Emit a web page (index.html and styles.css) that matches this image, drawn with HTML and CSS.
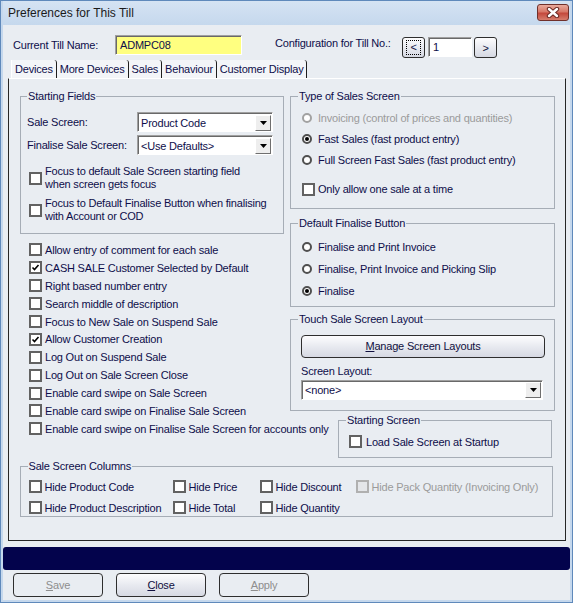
FILE: index.html
```html
<!DOCTYPE html>
<html lang="en">

<head>
    <meta charset="UTF-8">
    <meta name="viewport" content="width=device-width, initial-scale=1.0">
    <title>Preferences for This Till</title>
    <link rel="stylesheet" href="styles.css">
</head>

<body>
    <div class="window">
        <div class="titlebar">
            <span class="title">Preferences for This Till</span>
            <button class="close-x">
                <svg width="14" height="11" viewBox="0 0 14 11">
                    <path d="M3 2 L11 9 M11 2 L3 9" stroke="#6b2a24" stroke-width="4.4" stroke-linecap="round" />
                    <path d="M3 2 L11 9 M11 2 L3 9" stroke="#fff" stroke-width="2.4" stroke-linecap="round" />
                </svg>
            </button>
        </div>

        <div class="client">
            <!-- till name + till number picker -->
            <div class="till-row">
                <span class="till-lbl">Current Till Name:</span>
                <div class="edit yellow">ADMPC08</div>
                <span class="cfg-lbl">Configuration for Till No.:</span>
                <button class="nav-btn"><span class="focus">&lt;</span></button>
                <div class="edit num">1</div>
                <button class="nav-btn">&gt;</button>
            </div>

            <div class="tabs">
                <div class="tab">Devices</div>
                <div class="tab">More Devices</div>
                <div class="tab">Sales</div>
                <div class="tab">Behaviour</div>
                <div class="tab">Customer Display</div>
            </div>

            <div class="panel">
                <div class="col-left">
                    <fieldset class="group starting">
                        <legend>Starting Fields</legend>
                        <div class="field-row">
                            <span class="field-lbl">Sale Screen:</span>
                            <div class="combo">
                                <span class="combo-text">Product Code</span>
                                <span class="drop"><svg width="7" height="4" viewBox="0 0 7 4"><polygon points="0,0 7,0 3.5,4" fill="#000" /></svg></span>
                            </div>
                        </div>
                        <div class="field-row">
                            <span class="field-lbl">Finalise Sale Screen:</span>
                            <div class="combo">
                                <span class="combo-text">&lt;Use Defaults&gt;</span>
                                <span class="drop"><svg width="7" height="4" viewBox="0 0 7 4"><polygon points="0,0 7,0 3.5,4" fill="#000" /></svg></span>
                            </div>
                        </div>
                        <div class="check two-line first">
                            <span class="box"></span>
                            <span>Focus to default Sale Screen starting field<br>when screen gets focus</span>
                        </div>
                        <div class="check two-line">
                            <span class="box"></span>
                            <span>Focus to Default Finalise Button when finalising<br>with Account or COD</span>
                        </div>
                    </fieldset>

                    <div class="check-list">
                        <div class="check"><span class="box"></span>Allow entry of comment for each sale</div>
                        <div class="check"><span class="box"><svg width="9" height="9" viewBox="0 0 9 9"><path d="M1.5 4.5 L3.5 6.5 L7.5 2" stroke="#000" stroke-width="1.6" fill="none" /></svg></span>CASH SALE Customer Selected by Default</div>
                        <div class="check"><span class="box"></span>Right based number entry</div>
                        <div class="check"><span class="box"></span>Search middle of description</div>
                        <div class="check"><span class="box"></span>Focus to New Sale on Suspend Sale</div>
                        <div class="check"><span class="box"><svg width="9" height="9" viewBox="0 0 9 9"><path d="M1.5 4.5 L3.5 6.5 L7.5 2" stroke="#000" stroke-width="1.6" fill="none" /></svg></span>Allow Customer Creation</div>
                        <div class="check"><span class="box"></span>Log Out on Suspend Sale</div>
                        <div class="check"><span class="box"></span>Log Out on Sale Screen Close</div>
                        <div class="check"><span class="box"></span>Enable card swipe on Sale Screen</div>
                        <div class="check"><span class="box"></span>Enable card swipe on Finalise Sale Screen</div>
                        <div class="check"><span class="box"></span>Enable card swipe on Finalise Sale Screen for accounts only</div>
                    </div>
                </div>

                <div class="col-right">
                    <fieldset class="group sales-type">
                        <legend>Type of Sales Screen</legend>
                        <div class="opt disabled"><span class="radio"></span>Invoicing (control of prices and quantities)</div>
                        <div class="opt"><span class="radio on"></span>Fast Sales (fast product entry)</div>
                        <div class="opt"><span class="radio"></span>Full Screen Fast Sales (fast product entry)</div>
                        <div class="check one-sale"><span class="box"></span>Only allow one sale at a time</div>
                    </fieldset>

                    <fieldset class="group finalise">
                        <legend>Default Finalise Button</legend>
                        <div class="opt"><span class="radio"></span>Finalise and Print Invoice</div>
                        <div class="opt"><span class="radio"></span>Finalise, Print Invoice and Picking Slip</div>
                        <div class="opt"><span class="radio on"></span>Finalise</div>
                    </fieldset>

                    <fieldset class="group touch">
                        <legend>Touch Sale Screen Layout</legend>
                        <button class="btn wide"><u>M</u>anage Screen Layouts</button>
                        <div class="layout-lbl">Screen Layout:</div>
                        <div class="combo long">
                            <span class="combo-text">&lt;none&gt;</span>
                            <span class="drop"><svg width="7" height="4" viewBox="0 0 7 4"><polygon points="0,0 7,0 3.5,4" fill="#000" /></svg></span>
                        </div>
                    </fieldset>

                    <fieldset class="group start-screen">
                        <legend>Starting Screen</legend>
                        <div class="check"><span class="box"></span>Load Sale Screen at Startup</div>
                    </fieldset>
                </div>

                <fieldset class="group columns">
                    <legend>Sale Screen Columns</legend>
                    <div class="col-grid">
                        <div class="check"><span class="box"></span>Hide Product Code</div>
                        <div class="check"><span class="box"></span>Hide Price</div>
                        <div class="check"><span class="box"></span>Hide Discount</div>
                        <div class="check disabled"><span class="box"></span>Hide Pack Quantity (Invoicing Only)</div>
                        <div class="check"><span class="box"></span>Hide Product Description</div>
                        <div class="check"><span class="box"></span>Hide Total</div>
                        <div class="check"><span class="box"></span>Hide Quantity</div>
                    </div>
                </fieldset>
            </div>

            <div class="status-bar"></div>

            <div class="actions">
                <button class="btn action" disabled><u>S</u>ave</button>
                <button class="btn action"><u>C</u>lose</button>
                <button class="btn action" disabled><u>A</u>pply</button>
            </div>
        </div>
    </div>
</body>

</html>
```

FILE: styles.css
```css
* {
    box-sizing: border-box;
    margin: 0;
    padding: 0;
}

body {
    font-family: "Liberation Sans", Arial, sans-serif;
    font-size: 11px;
    letter-spacing: -0.2px;
    color: #0e0e4a;
    background: #fff;
}

button {
    font-family: inherit;
    font-size: 11px;
    letter-spacing: inherit;
}

/* window frame */
.window {
    width: 573px;
    height: 603px;
    display: flex;
    flex-direction: column;
    background: #c5d8ed;
    border: 1px solid #5f89bb;
    padding: 0 2px 2px 2px;
}

.titlebar {
    height: 24px;
    display: flex;
    align-items: flex-start;
    justify-content: space-between;
    padding: 0 1px 0 5px;
    background: linear-gradient(#d5e3f3, #c5d8ed);
}

.title {
    font-size: 12px;
    line-height: 24px;
    letter-spacing: 0;
    color: #1a1a1a;
}

.close-x {
    width: 32px;
    height: 17px;
    margin-top: 3px;
    border: 1px solid #70302a;
    border-radius: 3px;
    background: linear-gradient(#e9aa9c, #d77868 45%, #c4493c 55%, #d67d6c);
    display: flex;
    align-items: center;
    justify-content: center;
}

.client {
    flex: 1;
    display: flex;
    flex-direction: column;
    background: #e9edf2;
}

/* top row */
.till-row {
    display: flex;
    align-items: flex-start;
    height: 20px;
    margin-top: 10px;
    padding-left: 10px;
}

.till-lbl {
    width: 102px;
    line-height: 20px;
}

.cfg-lbl {
    width: 127px;
    margin-left: 33px;
    margin-top: -2px;
    line-height: 20px;
}

.edit {
    height: 20px;
    padding-left: 4px;
    line-height: 18px;
    border: 1px solid;
    border-color: #a0a0a0 #fff #fff #a0a0a0;
    box-shadow: inset 1px 1px 0 #696969;
}

.yellow {
    width: 127px;
    background: #ffff80;
}

.num {
    width: 44px;
    margin: 2px 0 0 3px;
    background: #fff;
}

.nav-btn {
    width: 23px;
    height: 21px;
    margin-top: 2px;
    margin-left: 2px;
    border: 1px solid #2e2e2e;
    border-radius: 3px;
    background: linear-gradient(#fdfdfe, #e8eaf0 50%, #d6d9e3);
    color: #101040;
    display: flex;
    align-items: center;
    justify-content: center;
}

.nav-btn:first-of-type {
    margin-left: 0;
}

.focus {
    width: 15px;
    height: 15px;
    border: 1px dotted #000;
    line-height: 13px;
    text-align: center;
}

/* tabs */
.tabs {
    display: flex;
    height: 18px;
    margin-top: 5px;
    padding-left: 8px;
}

.tab {
    padding: 0 3px;
    line-height: 18px;
    background: #f3f5f8;
    border-right: 1px solid #1e1e1e;
    border-top-right-radius: 3px;
}

.tab:first-child {
    border-left: 1px solid #fff;
}

.panel {
    height: 463px;
    margin: 0 4px 0 5px;
    border: 1px solid #262626;
    border-top-color: #fff;
    padding: 10.5px 10px 0 11px;
    display: grid;
    grid-template-columns: 264px 265px;
    column-gap: 6px;
    row-gap: 2.5px;
    align-items: start;
    align-content: start;
}

/* group boxes */
.group {
    border: 1px solid #a6adb6;
    min-width: 0;
}

.group legend {
    padding: 0 1px;
    line-height: 13px;
}

.starting {
    padding: 9.5px 8px 10px 6px;
}

.field-row {
    display: flex;
    align-items: center;
    height: 20px;
    margin-bottom: 3px;
}

.field-lbl {
    width: 110px;
}

.combo {
    width: 136px;
    height: 20px;
    display: flex;
    align-items: center;
    justify-content: space-between;
    background: #fff;
    border: 1px solid;
    border-color: #a0a0a0 #fff #fff #a0a0a0;
    box-shadow: inset 1px 1px 0 #696969;
    padding: 1px 1px 0 3px;
}

.combo.long {
    width: 242px;
}

.drop {
    width: 16px;
    height: 16px;
    background: #eeeeee;
    border: 1px solid;
    border-color: #fff #6f6f6f #6f6f6f #fff;
    display: flex;
    align-items: center;
    justify-content: center;
}

/* checkboxes and radios */
.check {
    display: flex;
    align-items: center;
    gap: 3px;
    white-space: nowrap;
}

.box {
    flex: none;
    width: 13px;
    height: 13px;
    border: 2px solid #626262;
    background: #fff;
    display: flex;
    align-items: center;
    justify-content: center;
}

.two-line {
    margin-left: 2px;
    margin-top: 6px;
    line-height: 13px;
}

.two-line .box {
    margin-top: 1px;
}

.two-line.first {
    margin-top: 10px;
}

.check-list {
    margin-top: 7px;
    padding-left: 9px;
}

.check-list .check {
    height: 17.9px;
}

.opt {
    display: flex;
    align-items: center;
    gap: 6px;
    height: 21px;
    white-space: nowrap;
}

.radio {
    flex: none;
    width: 10px;
    height: 10px;
    border: 2px solid #505050;
    border-radius: 50%;
    background: #fff;
    display: flex;
    align-items: center;
    justify-content: center;
}

.radio.on::after {
    content: "";
    width: 4px;
    height: 4px;
    border-radius: 50%;
    background: #000;
}

.disabled {
    color: #9b9b9b;
}

.disabled .radio {
    border-color: #a2a2a2;
}

.disabled .box {
    border-color: #b0b0b0;
    background: #e4e6e9;
}

/* right hand groups */
.sales-type {
    padding: 5px 8px 8.5px 11px;
}

.sales-type legend,
.finalise legend {
    margin-left: -4px;
}

.one-sale {
    height: 21px;
    margin-top: 8px;
}

.finalise {
    margin-top: 8px;
    padding: 6px 8px 4px 11px;
}

.finalise .opt {
    height: 22px;
}

.touch {
    margin-top: 6px;
    padding: 8.5px 10px 10px 10px;
}

.touch legend {
    margin-left: -3px;
}

.btn {
    border: 1px solid #2e2e2e;
    border-radius: 4px;
    background: linear-gradient(#fdfdfe, #e8eaf0 50%, #d6d9e3);
    color: #101040;
}

.btn.wide {
    display: block;
    width: 244px;
    height: 23px;
}

.layout-lbl {
    margin-top: 7px;
    line-height: 13px;
}

.touch .combo {
    margin-top: 2px;
}

.start-screen {
    margin: 3.5px 3px 0 48px;
    padding: 6.5px 8px 7px 10px;
}

.start-screen legend {
    margin-left: -3px;
}

.start-screen .check {
    height: 16px;
    gap: 4px;
}

.columns {
    grid-column: 1 / -1;
    margin-right: 2px;
    padding: 6.5px 8px 1px 7.5px;
}

.columns legend {
    margin-left: -1px;
}

.col-grid {
    display: grid;
    grid-template-columns: 144px 87px 96px auto;
    row-gap: 7px;
}

.col-grid .check {
    height: 14px;
}

/* bottom bar */
.status-bar {
    height: 23px;
    margin-top: 6px;
    background: #03034c;
    border-radius: 3px;
}

.actions {
    display: flex;
    gap: 13px;
    margin-top: 3px;
    padding-left: 10px;
}

.btn.action {
    width: 90px;
    height: 24px;
}

.btn.action:disabled {
    background: transparent;
    color: #8e8e8e;
}
```
